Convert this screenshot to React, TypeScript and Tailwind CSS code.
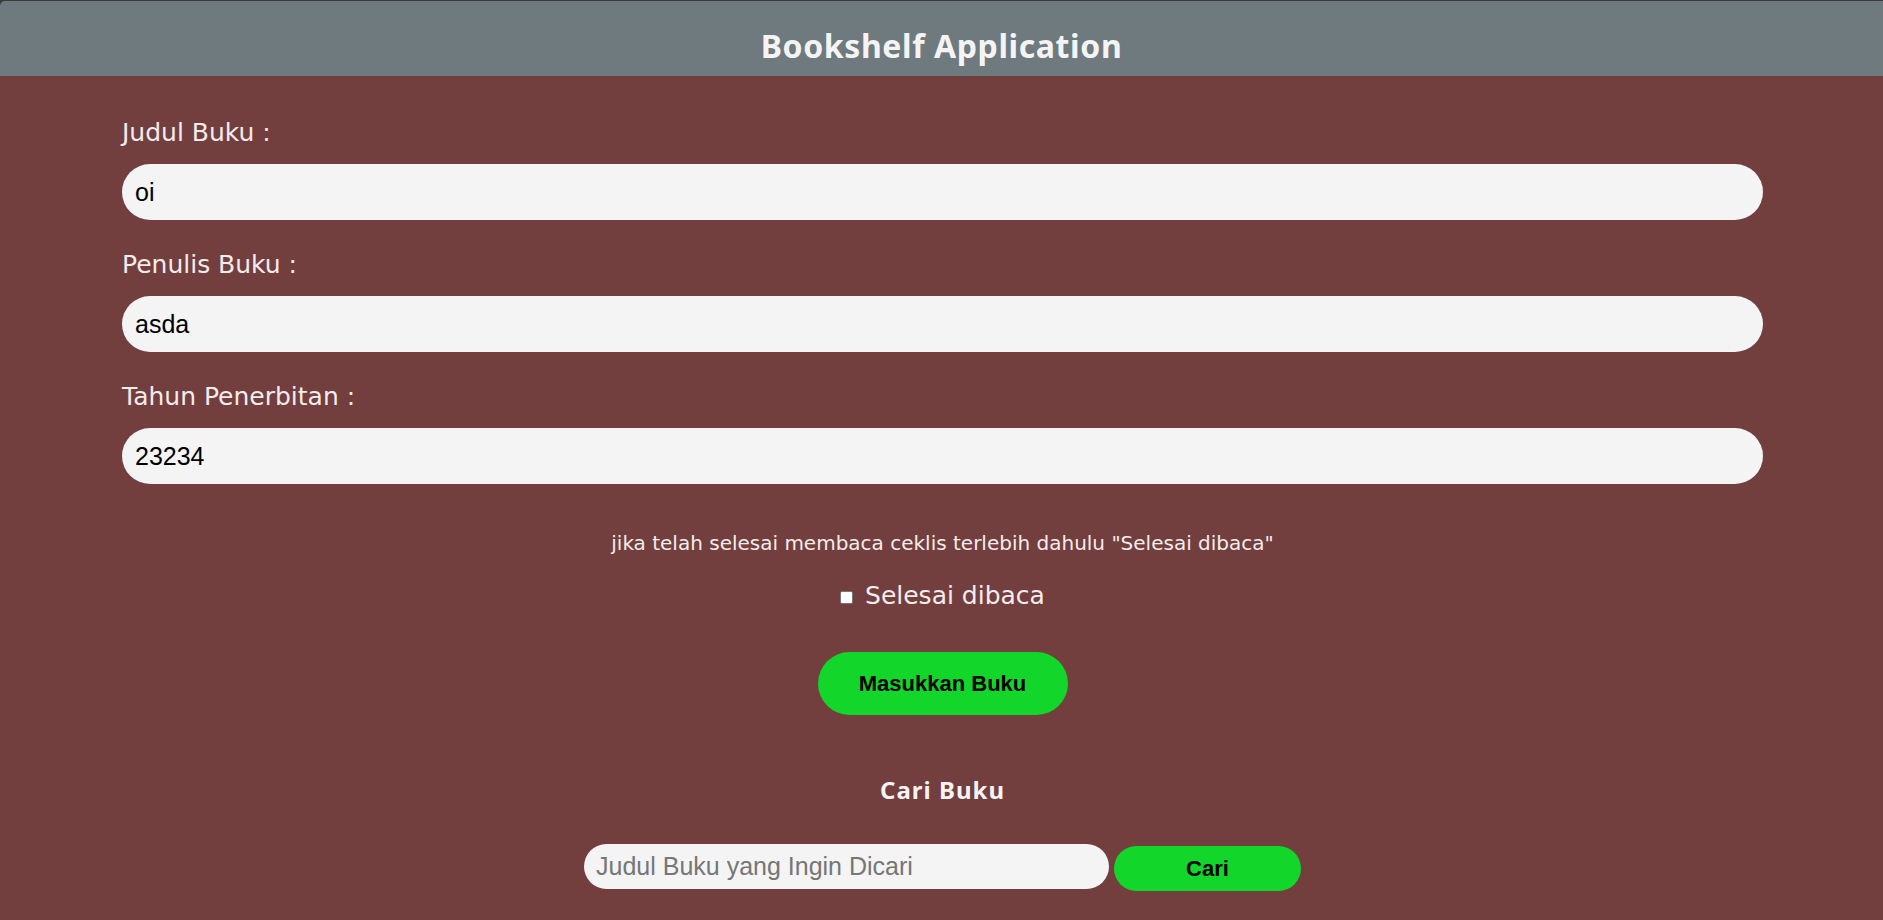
import React from "react";

const body = { fontFamily: '"DejaVu Sans", "Noto Sans", sans-serif' };
const heading = { fontFamily: '"Noto Sans", "Open Sans", sans-serif' };
const arial = { fontFamily: '"Liberation Sans", Arial, sans-serif' };

export default function App() {
  return (
    <div className="min-h-[920px] w-full bg-[#3b3b3b] pt-px" style={body}>
      <header className="h-[75px] pt-[25px] rounded-tl-[5px] bg-[#6f7a7e] text-center">
        <h1 className="text-[32px] leading-[40px] font-bold text-[#f4f4f4] tracking-[0.6px]" style={heading}>
          Bookshelf Application
        </h1>
      </header>
      <main className="bg-[#733e3e] min-h-[844px] pl-[122px] pr-[120px] pt-[38px] pb-[40px]">
        <form className="flex flex-col" onSubmit={(e) => e.preventDefault()}>
          <Field label="Judul Buku :" value="oi" first />
          <Field label="Penulis Buku :" value="asda" />
          <Field label="Tahun Penerbitan :" value="23234" />

          <p className="mt-[46px] text-center text-[20px] leading-[26px] text-[#f3ecec]">
            jika telah selesai membaca ceklis terlebih dahulu "Selesai dibaca"
          </p>
          <div className="mt-[23px] flex items-center justify-center gap-[12px] text-[25px] leading-[34px] text-[#f3ecec]">
            <input
              type="checkbox"
              className="appearance-none w-[13px] h-[13px] mt-[3px] bg-white border border-[#767676] rounded-[2px]"
            />
            <span>Selesai dibaca</span>
          </div>
          <div className="mt-[39px] flex justify-center">
            <button
              type="submit"
              className="w-[250px] h-[63px] rounded-full bg-[#13d62a] text-black font-bold text-[22px]"
              style={arial}
            >
              Masukkan Buku
            </button>
          </div>
        </form>

        <h2 className="mt-[59px] text-center text-[24px] leading-[32px] font-bold text-[#f4f4f4] tracking-[1px]" style={heading}>
          Cari Buku
        </h2>
        <div className="mt-[38px] flex justify-center items-start gap-[5px]">
          <input
            type="text"
            placeholder="Judul Buku yang Ingin Dicari"
            className="w-[525px] h-[45px] rounded-full bg-[#f4f4f4] px-[12px] text-[25px] text-black placeholder:text-[#767676] outline-none"
            style={arial}
          />
          <button
            className="mt-[2px] w-[187px] h-[45px] rounded-full bg-[#13d62a] text-black font-bold text-[22px]"
            style={arial}
          >
            Cari
          </button>
        </div>
      </main>
    </div>
  );
}

function Field({ label, value, first }: { label: string; value: string; first?: boolean }) {
  return (
    <div className={first ? "flex flex-col" : "flex flex-col mt-[26px]"}>
      <label className="text-[25px] leading-[38px] text-[#f3ecec]">{label}</label>
      <input
        type="text"
        defaultValue={value}
        className="mt-[12px] h-[56px] w-full rounded-full bg-[#f4f4f4] px-[13px] text-[25px] text-black outline-none"
        style={arial}
      />
    </div>
  );
}
